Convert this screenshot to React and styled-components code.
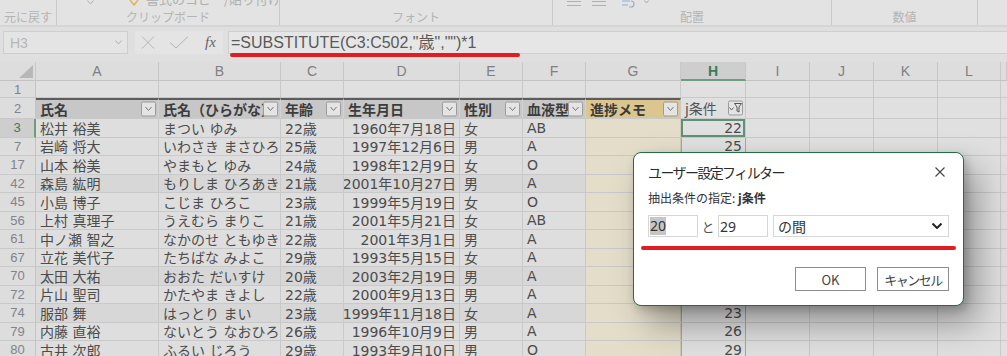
import React from 'react';
import styled, { createGlobalStyle } from 'styled-components';

const GlobalStyle = createGlobalStyle`
  html, body { margin: 0; padding: 0; }
  body {
    width: 1007px; height: 356px; overflow: hidden;
    background: #e0e0e0;
    font-family: "Noto Sans CJK JP", "Noto Sans", sans-serif;
  }
`;

const COLS = '36px 123px 122px 63px 116px 63px 63px 95px 65px 64px 64px 64px 63px 6px';
const LETTERS = ['A', 'B', 'C', 'D', 'E', 'F', 'G', 'H', 'I', 'J', 'K', 'L', ''];

const Page = styled.div`
  position: relative;
  width: 1007px;
  height: 356px;
  overflow: hidden;
  background: #e0e0e0;
`;

/* ---------- Ribbon ---------- */
const Ribbon = styled.div`
  display: flex;
  height: 27px;
  box-sizing: border-box;
  background: #e3e3e3;
  border-bottom: 2px solid #d5d5d5;
  overflow: hidden;
`;
const RibbonGroup = styled.div`
  width: ${p => p.$w}px;
  flex: none;
  height: 25px;
  box-sizing: border-box;
  display: flex;
  flex-direction: column;
  justify-content: space-between;
  border-right: ${p => (p.$last ? 'none' : '1px solid #c9c9c9')};
`;
const GroupTop = styled.div`
  display: flex;
  align-items: flex-start;
  height: 14px;
  margin-top: -8px;
`;
const TopItem = styled.span`
  margin-left: ${p => p.$ml}px;
  margin-top: ${p => p.$mt || 0}px;
  display: inline-flex;
  color: #b0b0b0;
  font-size: 13px;
  line-height: 14px;
  white-space: nowrap;
`;
const GroupLabel = styled.div`
  text-align: center;
  font-size: 12px;
  line-height: 14px;
  color: #b4b4b4;
  padding-bottom: 1px;
`;

/* ---------- Formula bar ---------- */
const FormulaBar = styled.div`
  position: relative;
  display: flex;
  align-items: flex-start;
  height: 35px;
  box-sizing: border-box;
  padding-top: 4px;
  background: #dfdfdf;
`;
const NameBox = styled.div`
  margin-left: 3px;
  width: 125px;
  height: 23px;
  box-sizing: border-box;
  background: #e4e4e4;
  border: 1px solid #cecece;
  display: flex;
  align-items: center;
  justify-content: space-between;
  padding: 0 5px 0 6px;
  color: #b6b6b6;
  font: 400 14px "Liberation Sans", sans-serif;
`;
const FxBox = styled.div`
  margin-left: 7px;
  width: 88px;
  height: 23px;
  box-sizing: border-box;
  background: #e4e4e4;
  display: flex;
  align-items: center;
  padding-left: 6px;
  gap: 14px;
`;
const FxLabel = styled.span`
  font: italic 400 15px "Liberation Serif", serif;
  color: #666;
  margin-left: 2px;
`;
const FormulaInput = styled.div`
  margin-left: 5px;
  flex: 1;
  height: 23px;
  box-sizing: border-box;
  background: #e6e6e6;
  border: 1px solid #cecece;
  border-right: none;
  padding-left: 2px;
  font: 400 16px "Liberation Sans", "Noto Sans CJK JP", sans-serif;
  line-height: 21px;
  color: #5a5a5a;
  white-space: nowrap;
`;
const RedMark = styled.div`
  position: absolute;
  left: 230px;
  top: 26px;
  width: 290px;
  height: 4px;
  border-radius: 2px;
  background: #e31b23;
`;

/* ---------- Sheet ---------- */
const Sheet = styled.div`
  display: flex;
  flex-direction: column;
`;
const Row = styled.div`
  display: grid;
  grid-template-columns: ${COLS};
  height: ${p => p.$h}px;
`;
const Corner = styled.div`
  box-sizing: border-box;
  background: #dddddd;
  border-right: 1px solid #c7c7c7;
  border-bottom: 1px solid #c2c2c2;
  display: flex;
  align-items: flex-end;
  justify-content: flex-end;
  padding: 0 2px 2px 0;
`;
const ColHead = styled.div`
  box-sizing: border-box;
  display: flex;
  align-items: center;
  justify-content: center;
  background: ${p => (p.$sel ? '#cecece' : '#dddddd')};
  border-right: 1px solid #c7c7c7;
  border-bottom: ${p => (p.$sel ? '2px solid #6c9d81' : '1px solid #c2c2c2')};
  color: ${p => (p.$sel ? '#3d7a57' : '#808080')};
  font: ${p => (p.$sel ? 700 : 400)} 14px "Liberation Sans", sans-serif;
`;
const RowHead = styled.div`
  box-sizing: border-box;
  display: flex;
  align-items: center;
  justify-content: center;
  background: ${p => (p.$sel ? '#cecece' : '#dddddd')};
  border-right: ${p => (p.$sel ? '2px solid #6c9d81' : '1px solid #c4c4c4')};
  border-bottom: 1px solid #c9c9c9;
  color: ${p => (p.$sel ? '#3d7a57' : '#80838f')};
  font: 400 13px "Liberation Sans", sans-serif;
`;
const Cell = styled.div`
  box-sizing: border-box;
  display: flex;
  align-items: center;
  justify-content: ${p => (p.$right ? 'flex-end' : 'flex-start')};
  padding: 0 3px 0 4px;
  background: ${p => p.$bg || '#e0e0e0'};
  border-right: 1px solid ${p => p.$vline || '#c9c9c9'};
  border-bottom: 1px solid #c9c9c9;
  box-shadow: ${p => p.$ring ? 'inset 0 0 0 2px #5e9275' : p.$lline ? 'inset 1px 0 0 #9aa4c8' : 'none'};
  overflow: hidden;
  white-space: nowrap;
  color: #4c4c4c;
  font: 400 14px "DejaVu Sans", "Noto Sans CJK JP", sans-serif;
`;
const TableHead = styled.div`
  position: relative;
  box-sizing: border-box;
  display: flex;
  align-items: center;
  padding: 0 0 0 4px;
  background: ${p => p.$bg};
  border-top: ${p => (p.$top ? '2px solid #5c5c5c' : 'none')};
  border-right: 1px solid ${p => p.$line || '#d2d2d2'};
  border-bottom: 1px solid #c9c9c9;
  overflow: hidden;
  white-space: nowrap;
  color: ${p => (p.$plain ? '#555' : '#3c3c3c')};
  font: ${p => (p.$plain ? 400 : 700)} 14px "Noto Sans CJK JP", sans-serif;
`;
const FilterBtn = styled.span`
  position: absolute;
  right: 2px;
  top: 50%;
  transform: translateY(-50%);
  width: 15px;
  height: 15px;
  box-sizing: border-box;
  border: 1px solid #9b9b9b;
  border-radius: 2px;
  background: #e4e4e4;
  display: flex;
  align-items: center;
  justify-content: center;
`;

/* ---------- Dialog ---------- */
const Dialog = styled.div`
  position: absolute;
  left: 633px;
  top: 152px;
  width: 331px;
  height: 154px;
  box-sizing: border-box;
  background: #ffffff;
  border: 1px solid #1f6f43;
  border-radius: 8px;
  box-shadow: 14px 18px 34px rgba(0, 0, 0, 0.34), 3px 4px 10px rgba(0, 0, 0, 0.2);
  display: flex;
  flex-direction: column;
  padding: 0 14px;
`;
const TitleRow = styled.div`
  height: 38px;
  display: flex;
  align-items: center;
  justify-content: space-between;
`;
const Title = styled.div`
  font-size: 14px;
  letter-spacing: -1.6px;
  color: #2b2b2b;
`;
const CloseBtn = styled.span`
  display: flex;
  margin-right: 4px;
`;
const Subtitle = styled.div`
  font-size: 12px;
  line-height: 14px;
  color: #333;
  white-space: nowrap;
  b { font-weight: 700; }
`;
const InputsRow = styled.div`
  margin-top: 10px;
  height: 22px;
  display: flex;
  align-items: stretch;
`;
const TextBox = styled.div`
  width: 50px;
  box-sizing: border-box;
  border: 1px solid #d6d6d6;
  display: flex;
  align-items: center;
  padding-left: 1px;
  font: 400 14px "Noto Sans", sans-serif;
  color: #333;
`;
const Selected = styled.span`
  background: #c6c6c6;
  line-height: 18px;
`;
const Conj = styled.span`
  width: 20px;
  display: flex;
  align-items: center;
  justify-content: center;
  font-size: 13px;
  color: #555;
`;
const SelectBox = styled.div`
  margin-left: 5px;
  flex: 1;
  box-sizing: border-box;
  border: 1px solid #d6d6d6;
  display: flex;
  align-items: center;
  justify-content: space-between;
  padding: 0 6px 0 4px;
  font-size: 14px;
  color: #333;
`;
const RedLine = styled.div`
  margin: 9px -7px 0;
  height: 4px;
  border-radius: 2px;
  background: #e31b23;
`;
const ButtonRow = styled.div`
  margin-top: 17px;
  display: flex;
  justify-content: flex-end;
  gap: 11px;
`;
const DlgButton = styled.div`
  width: ${p => p.$w}px;
  height: 24px;
  box-sizing: border-box;
  border: 1px solid #8c8c8c;
  background: #fff;
  display: flex;
  align-items: center;
  justify-content: center;
  font-size: 13px;
  color: #444;
  letter-spacing: ${p => p.$ls || 0}px;
`;

/* ---------- Icons ---------- */
const Chevron = ({ color = '#707070', w = 7, h = 4, sw = 1 }) => (
  <svg width={w} height={h + 1} viewBox={`0 0 ${w} ${h + 1}`}>
    <polyline points={`0.5,0.5 ${w / 2},${h} ${w - 0.5},0.5`} fill="none" stroke={color} strokeWidth={sw} />
  </svg>
);
const LinesIcon = () => (
  <svg width="14" height="8" viewBox="0 0 14 8">
    <line x1="0" y1="1.5" x2="14" y2="1.5" stroke="#b0b0b0" />
    <line x1="0" y1="5.5" x2="14" y2="5.5" stroke="#b0b0b0" />
  </svg>
);
const WrapIcon = () => (
  <svg width="16" height="8" viewBox="0 0 16 8">
    <path d="M2 1 L10 1 M2 5 L8 5 M11 1 Q14 1 14 4 Q14 7 11 7 L9 7" fill="none" stroke="#8fb2d8" strokeWidth="1.2" />
  </svg>
);
const FunnelBtnIcon = () => (
  <svg width="13" height="11" viewBox="0 0 13 11">
    <polyline points="0.5,5 2.5,7.5 4.5,5" fill="none" stroke="#666" />
    <path d="M5.5 1 L12.5 1 L10 4.5 L10 9.5 L8 8.5 L8 4.5 Z" fill="none" stroke="#555" strokeWidth="1" />
  </svg>
);

const rows = [
  [3, '松井 裕美', 'まつい ゆみ', '22歳', '1960年7月18日', '女', 'AB', 22],
  [7, '岩崎 将大', 'いわさき まさひろ', '25歳', '1997年12月6日', '男', 'A', 25],
  [17, '山本 裕美', 'やまもと ゆみ', '24歳', '1998年12月9日', '女', 'O', 24],
  [42, '森島 紘明', 'もりしま ひろあき', '21歳', '2001年10月27日', '男', 'A', 21],
  [45, '小島 博子', 'こじま ひろこ', '23歳', '1999年5月19日', '女', 'O', 23],
  [56, '上村 真理子', 'うえむら まりこ', '21歳', '2001年5月21日', '女', 'AB', 21],
  [61, '中ノ瀬 智之', 'なかのせ ともゆき', '22歳', '2001年3月1日', '男', 'A', 22],
  [67, '立花 美代子', 'たちばな みよこ', '29歳', '1993年5月15日', '女', 'A', 29],
  [70, '太田 大祐', 'おおた だいすけ', '20歳', '2003年2月19日', '男', 'A', 20],
  [72, '片山 聖司', 'かたやま きよし', '22歳', '2000年9月13日', '男', 'A', 22],
  [74, '服部 舞', 'はっとり まい', '23歳', '1999年11月18日', '女', 'A', 23],
  [79, '内藤 直裕', 'ないとう なおひろ', '26歳', '1996年10月9日', '男', 'A', 26],
  [80, '古井 次郎', 'ふるい じろう', '29歳', '1993年9月10日', '男', 'O', 29],
];
const DARK_ROWS = [42, 70, 74];

const headers = ['氏名', '氏名（ひらがな）', '年齢', '生年月日', '性別', '血液型'];

export default function App() {
  return (
    <Page>
      <GlobalStyle />
      <Ribbon>
        <RibbonGroup $w={57}>
          <GroupTop />
          <GroupLabel>元に戻す</GroupLabel>
        </RibbonGroup>
        <RibbonGroup $w={223}>
          <GroupTop>
            <TopItem $ml={30} $mt={8}><Chevron color="#b0b0b0" /></TopItem>
            <TopItem $ml={35} $mt={6}>
              <svg width="10" height="8" viewBox="0 0 10 8">
                <path d="M1 2 L5 7 L9 2" fill="none" stroke="#e8b45a" strokeWidth="1.6" />
              </svg>
            </TopItem>
            <TopItem $ml={7}>書式のコピー/貼り付け</TopItem>
          </GroupTop>
          <GroupLabel>クリップボード</GroupLabel>
        </RibbonGroup>
        <RibbonGroup $w={273}>
          <GroupTop />
          <GroupLabel>フォント</GroupLabel>
        </RibbonGroup>
        <RibbonGroup $w={279}>
          <GroupTop>
            <TopItem $ml={14} $mt={8}><LinesIcon /></TopItem>
            <TopItem $ml={11} $mt={8}><LinesIcon /></TopItem>
            <TopItem $ml={14} $mt={8}><WrapIcon /></TopItem>
            <TopItem $ml={8} $mt={8}><Chevron color="#a8a8a8" w={5} h={3} /></TopItem>
          </GroupTop>
          <GroupLabel>配置</GroupLabel>
        </RibbonGroup>
        <RibbonGroup $w={146}>
          <GroupTop />
          <GroupLabel>数値</GroupLabel>
        </RibbonGroup>
        <RibbonGroup $w={29} $last>
          <GroupTop />
        </RibbonGroup>
      </Ribbon>

      <FormulaBar>
        <NameBox>
          <span>H3</span>
          <Chevron color="#b0b0b0" />
        </NameBox>
        <FxBox>
          <svg width="14" height="13" viewBox="0 0 14 13">
            <path d="M1 0.5 L13 12.5 M13 0.5 L1 12.5" stroke="#b3b3b3" strokeWidth="1" fill="none" />
          </svg>
          <svg width="20" height="13" viewBox="0 0 20 13">
            <path d="M1 6.5 L7 12 L19 0.5" stroke="#b3b3b3" strokeWidth="1" fill="none" />
          </svg>
          <FxLabel>fx</FxLabel>
        </FxBox>
        <FormulaInput>=SUBSTITUTE(C3:C502,"歳","")*1</FormulaInput>
        <RedMark />
      </FormulaBar>

      <Sheet>
        <Row $h={19}>
          <Corner>
            <svg width="14" height="13" viewBox="0 0 14 13">
              <polygon points="14,0 14,13 0,13" fill="#b8b8b8" />
            </svg>
          </Corner>
          {LETTERS.map((l, i) => (
            <ColHead key={i} $sel={l === 'H'}>{l}</ColHead>
          ))}
        </Row>

        <Row $h={17}>
          <RowHead>1</RowHead>
          {LETTERS.map((l, i) => <Cell key={i} />)}
        </Row>

        <Row $h={21}>
          <RowHead>2</RowHead>
          {headers.map(h => (
            <TableHead key={h} $bg="#c7c7c7" $top>
              {h}
              <FilterBtn><Chevron color="#777" /></FilterBtn>
            </TableHead>
          ))}
          <TableHead $bg="#dcc690" $top $line="#c9c9c9">
            進捗メモ
            <FilterBtn><Chevron color="#777" /></FilterBtn>
          </TableHead>
          <TableHead $bg="#e0e0e0" $plain $line="#c9c9c9">
            j条件
            <FilterBtn><FunnelBtnIcon /></FilterBtn>
          </TableHead>
          {['I', 'J', 'K', 'L', 'M'].map(l => <Cell key={l} />)}
        </Row>

        {rows.map(([n, name, kana, age, dob, sex, blood, v]) => {
          const bg = DARK_ROWS.includes(n) ? '#d7d7d7' : '#dedede';
          return (
            <Row $h={18.5} key={n}>
              <RowHead $sel={n === 3}>{n}</RowHead>
              <Cell $bg={bg}>{name}</Cell>
              <Cell $bg={bg}>{kana}</Cell>
              <Cell $bg={bg}>{age}</Cell>
              <Cell $bg={bg} $right>{dob}</Cell>
              <Cell $bg={bg}>{sex}</Cell>
              <Cell $bg={bg}>{blood}</Cell>
              <Cell $bg="#e4ddca" $vline="#d0cab8" />
              <Cell $right $ring={n === 3} $lline={n !== 3} $vline={n === 3 ? '#c9c9c9' : '#9aa4c8'}>{v}</Cell>
              <Cell />
              <Cell />
              <Cell />
              <Cell />
              <Cell />
            </Row>
          );
        })}
      </Sheet>

      <Dialog>
        <TitleRow>
          <Title>ユーザー設定フィルター</Title>
          <CloseBtn>
            <svg width="10" height="10" viewBox="0 0 10 10">
              <path d="M0.5 0.5 L9.5 9.5 M9.5 0.5 L0.5 9.5" stroke="#444" strokeWidth="1.1" fill="none" />
            </svg>
          </CloseBtn>
        </TitleRow>
        <Subtitle>抽出条件の指定: <b>j条件</b></Subtitle>
        <InputsRow>
          <TextBox><Selected>20</Selected></TextBox>
          <Conj>と</Conj>
          <TextBox>29</TextBox>
          <SelectBox>
            <span>の間</span>
            <Chevron color="#222" w={10} h={5} sw={2} />
          </SelectBox>
        </InputsRow>
        <RedLine />
        <ButtonRow>
          <DlgButton $w={71}>OK</DlgButton>
          <DlgButton $w={72} $ls={-1.5}>キャンセル</DlgButton>
        </ButtonRow>
      </Dialog>
    </Page>
  );
}
